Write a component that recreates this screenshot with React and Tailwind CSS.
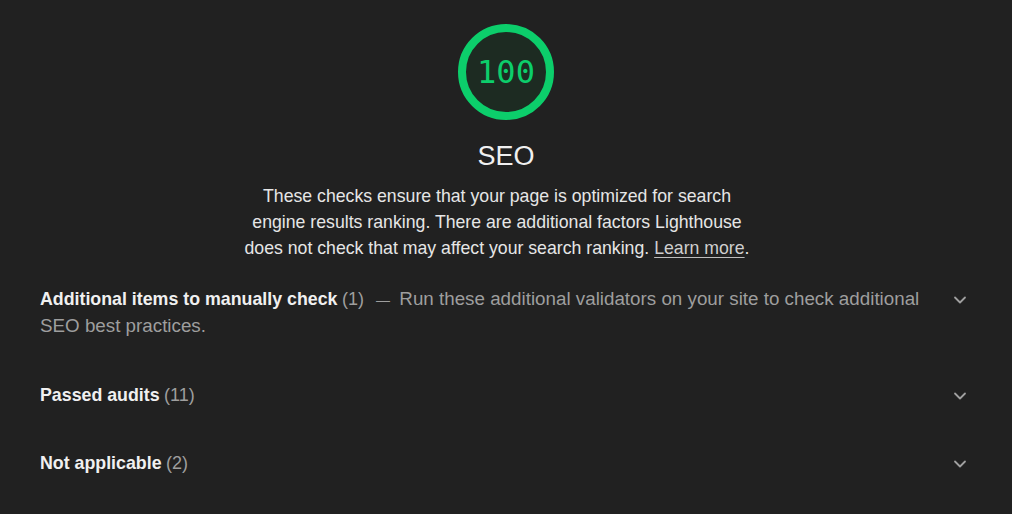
import React from "react";

const Chevron = () => (
    <svg width="14" height="10" viewBox="0 0 14 10" fill="none" className="shrink-0">
        <path d="M2 2.5l5 5 5-5" stroke="#a0a0a0" strokeWidth="1.8" strokeLinecap="round" strokeLinejoin="round" />
    </svg>
);

const Gauge = ({ score }) => (
    <div className="relative w-[96px] h-[96px]">
        <svg width="96" height="96" viewBox="0 0 96 96" className="absolute inset-0">
            <circle cx="48" cy="48" r="44" fill="#1d2b22" stroke="#0cce6b" strokeWidth="8" />
        </svg>
        <div className="absolute inset-0 flex items-center justify-center text-[32px] text-[#0cce6b] font-['DejaVu_Sans_Mono',monospace]">
            {score}
        </div>
    </div>
);

const AuditGroup = ({ title, count, description, pb }) => (
    <div className={`flex items-start justify-between pt-[21px] ${pb}`}>
        <div className="leading-[26px] pr-[12px]">
            <span className="font-bold text-[17.8px] text-[#f0f0f0]">{title}</span>{" "}
            <span className="text-[18px] text-[#9e9e9e]">({count})</span>
            {description && (
                <>
                    <span className="ml-[12px] mr-[5px] text-[14px] text-[#9e9e9e]">—</span>{" "}
                    <span className="text-[18.8px] text-[#9e9e9e]">{description}</span>
                </>
            )}
        </div>
        <div className="pt-[9px] pr-[5px]">
            <Chevron />
        </div>
    </div>
);

const App = () => {
    return (
        <div className="min-h-screen bg-[#212121] font-['Liberation_Sans',Arial,sans-serif] text-[#e8e8e8] overflow-hidden">
            {/* Header */}
            <div className="flex flex-col items-center pt-[24px]">
                <Gauge score="100" />
                <h1 className="mt-[20px] text-[27px] leading-[32px] text-[#f0f0f0]">SEO</h1>
                <p className="mt-[11px] mr-[18px] w-[515px] text-center text-[17.7px] leading-[26px] text-[#e6e6e6]">
                    These checks ensure that your page is optimized for search engine results ranking. There are additional factors Lighthouse does not check that may affect your search ranking.{" "}
                    <a href="#" className="underline underline-offset-[3px] decoration-[#bdbdbd] text-[#cfcfcf]">Learn more</a>.
                </p>
            </div>

            {/* Audit groups */}
            <div className="px-10 mt-[4px]">
                <AuditGroup
                    title="Additional items to manually check"
                    count="1"
                    description="Run these additional validators on your site to check additional SEO best practices."
                    pb="pb-[21px]"
                />
                <AuditGroup title="Passed audits" count="11" pb="pb-[20px]" />
                <AuditGroup title="Not applicable" count="2" pb="pb-[21px]" />
            </div>
        </div>
    );
};

export default App;
